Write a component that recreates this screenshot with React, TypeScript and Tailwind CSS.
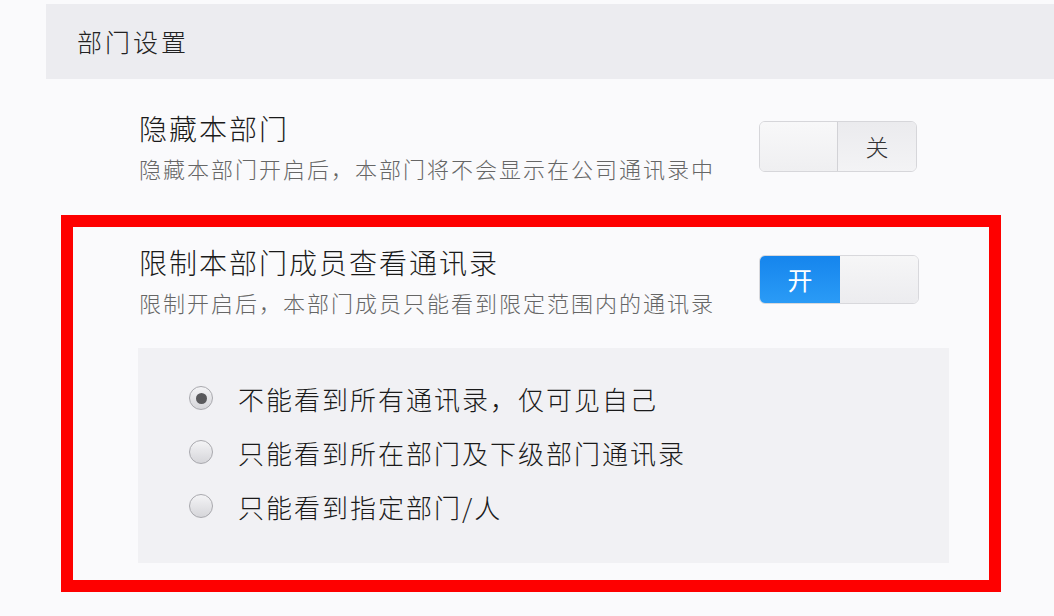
import React from 'react';

const font = { fontFamily: '"Noto Sans CJK SC", "Noto Sans", sans-serif' };

const OffToggle: React.FC = () => (
    <div className="flex w-[158px] h-[51px] rounded-[6px] border border-[#d6d6da] overflow-hidden shrink-0">
        <div className="w-[78px] h-full bg-gradient-to-b from-[#f8f8f9] to-[#efeff1] border-r border-[#d2d2d6]" />
        <div className="flex-1 h-full bg-gradient-to-b from-[#ebebee] to-[#f3f3f5] flex items-center justify-center text-[23px] font-light text-[#333]">
            关
        </div>
    </div>
);

const OnToggle: React.FC = () => (
    <div className="flex w-[160px] h-[49px] rounded-[6px] border border-[#d8d8dc] overflow-hidden shrink-0">
        <div className="w-[80px] h-full bg-gradient-to-b from-[#1585ed] to-[#2a9bf6] flex items-center justify-center text-[25px] text-white">
            开
        </div>
        <div className="flex-1 h-full bg-gradient-to-b from-[#f6f6f7] to-[#ececef]" />
    </div>
);

interface SettingRowProps {
    title: string;
    desc: string;
    on: boolean;
}

const SettingRow: React.FC<SettingRowProps> = ({ title, desc, on }) => (
    <div className="flex items-start">
        <div className="w-[620px]">
            <div className="text-[28px] leading-[36px] tracking-[2px] font-light text-[#1a1a1a]">{title}</div>
            <div className="mt-[7px] text-[22px] leading-[30px] tracking-[2px] font-light text-[#666]">{desc}</div>
        </div>
        <div className="mt-[11px]">{on ? <OnToggle /> : <OffToggle />}</div>
    </div>
);

const Radio: React.FC<{ checked?: boolean }> = ({ checked }) => (
    <div className="w-[24px] h-[24px] rounded-full border border-[#a9a9ae] bg-gradient-to-b from-[#f4f4f6] to-[#d6d6da] flex items-center justify-center shrink-0">
        {checked && <div className="w-[11px] h-[11px] rounded-full bg-[#59595c]" />}
    </div>
);

const options = [
    { label: '不能看到所有通讯录，仅可见自己', checked: true },
    { label: '只能看到所在部门及下级部门通讯录', checked: false },
    { label: '只能看到指定部门/人', checked: false },
];

export default function App() {
    return (
        <div className="w-[1054px] h-[616px] bg-[#fafafc] pt-[4px] pl-[46px] overflow-hidden" style={font}>
            <div className="h-[75px] bg-[#ececf0] flex items-center pl-[31px] text-[25px] tracking-[3px] font-light text-[#222]">
                部门设置
            </div>

            <div className="mt-[31px] pl-[93px]">
                <SettingRow title="隐藏本部门" desc="隐藏本部门开启后，本部门将不会显示在公司通讯录中" on={false} />
            </div>

            <div className="mt-[32px] ml-[15px] w-[940px] h-[377px] border-[12px] border-[#fe0000] pt-[17px] pl-[65px]">
                <div className="pl-[1px]">
                    <SettingRow title="限制本部门成员查看通讯录" desc="限制开启后，本部门成员只能看到限定范围内的通讯录" on={true} />
                </div>
                <div className="mt-[31px] w-[811px] h-[215px] bg-[#f1f1f4] pt-[23px] pl-[51px]">
                    {options.map((o) => (
                        <div key={o.label} className="h-[54px] flex items-center gap-[25px]">
                            <Radio checked={o.checked} />
                            <span className="text-[26px] tracking-[2px] font-light text-[#1a1a1a]">{o.label}</span>
                        </div>
                    ))}
                </div>
            </div>
        </div>
    );
}
